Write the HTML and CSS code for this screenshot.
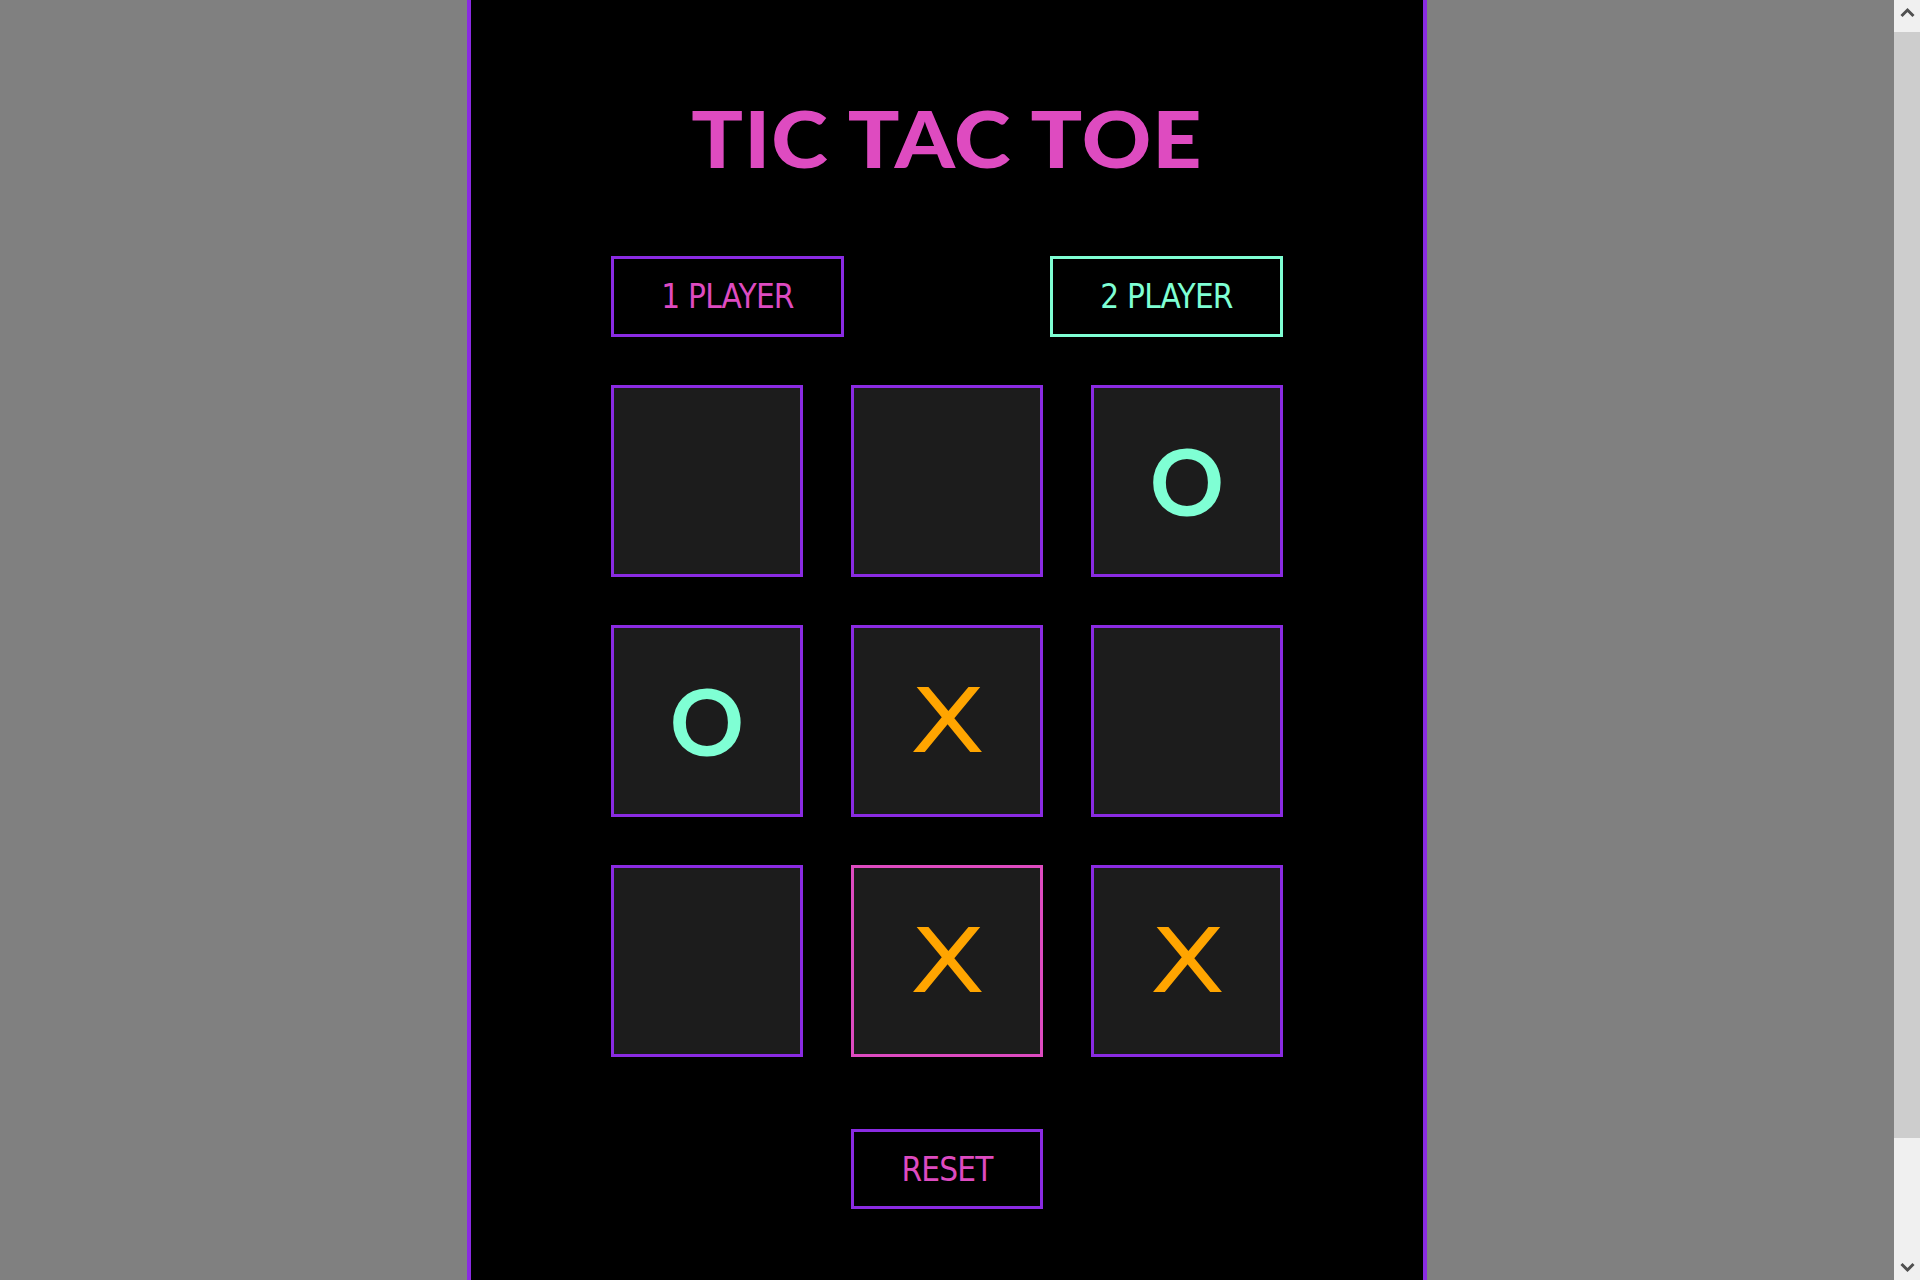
FILE: index.html
```html
<!DOCTYPE html>
<html lang="en">
<head>
<meta charset="utf-8">
<title>Tic Tac Toe</title>
<link rel="stylesheet" href="styles.css">
</head>
<body>
<div class="viewport">
  <main class="page">
    <h1 class="title">TIC TAC TOE</h1>
    <div class="modes">
      <button class="mode mode-one">1 PLAYER</button>
      <button class="mode mode-two">2 PLAYER</button>
    </div>
    <div class="board">
      <div class="cell"></div>
      <div class="cell"></div>
      <div class="cell"><span class="mark o">O</span></div>
      <div class="cell"><span class="mark o">O</span></div>
      <div class="cell"><span class="mark x">X</span></div>
      <div class="cell"></div>
      <div class="cell"></div>
      <div class="cell cell-active"><span class="mark x">X</span></div>
      <div class="cell"><span class="mark x">X</span></div>
    </div>
    <div class="actions">
      <button class="reset">RESET</button>
    </div>
  </main>
</div>
<div class="scrollbar" aria-hidden="true">
  <span class="sb-btn sb-up">
    <svg width="26" height="32" viewBox="0 0 26 32"><polyline points="7.5,16 13.5,10 19.5,16" fill="none" stroke="#505050" stroke-width="3"/></svg>
  </span>
  <span class="sb-track"><span class="sb-thumb"></span></span>
  <span class="sb-btn sb-down">
    <svg width="26" height="32" viewBox="0 0 26 32"><polyline points="7.5,16 13.5,22 19.5,16" fill="none" stroke="#505050" stroke-width="3"/></svg>
  </span>
</div>
</body>
</html>
```

FILE: styles.css
```css
html {
  background: #808080;
}
body {
  margin: 0;
  background: #808080;
  display: flex;
  align-items: flex-start;
  font-family: "DejaVu Sans Condensed", "DejaVu Sans", sans-serif;
}
.viewport {
  flex: 1;
  min-width: 0;
}
.page {
  box-sizing: border-box;
  width: 960px;
  min-height: 100vh;
  margin: 0 auto;
  background: #000;
  border-left: 4px solid #8a2be2;
  border-right: 4px solid #8a2be2;
  padding-top: 91px;
}
.title {
  margin: 0;
  text-align: center;
  font-family: "Lato", sans-serif;
  font-weight: 900;
  font-size: 78px;
  line-height: 94px;
  color: #de4bc0;
  letter-spacing: 1px;
  transform: scaleX(1.1);
}
.modes {
  width: 672px;
  margin: 71px auto 0;
  display: flex;
  justify-content: space-between;
}
button {
  font-family: "DejaVu Sans Condensed", "DejaVu Sans", sans-serif;
  font-size: 33px;
  letter-spacing: -0.8px;
  background: #000;
  padding: 0;
  cursor: pointer;
}
.mode {
  box-sizing: border-box;
  width: 233px;
  height: 81px;
  border: 3px solid #8a2be2;
  color: #de4bc0;
}
.mode-two {
  border-color: #7fffd4;
  color: #7fffd4;
}
.board {
  width: 672px;
  margin: 48px auto 0;
  display: grid;
  grid-template-columns: repeat(3, 192px);
  grid-auto-rows: 192px;
  gap: 48px;
}
.cell {
  box-sizing: border-box;
  border: 3px solid #8a2be2;
  background: #1c1c1c;
  display: flex;
  align-items: center;
  justify-content: center;
}
.cell-active {
  border-color: #de4bc0;
}
.mark {
  line-height: 1;
}
.x {
  font-family: "DejaVu Sans", sans-serif;
  font-size: 89px;
  color: #ffa500;
  transform: scaleX(1.24);
}
.o {
  font-family: "Lato", sans-serif;
  font-weight: 700;
  font-size: 92px;
  color: #7fffd4;
}
.actions {
  display: flex;
  justify-content: center;
  margin-top: 72px;
}
.reset {
  box-sizing: border-box;
  width: 192px;
  height: 80px;
  border: 3px solid #8a2be2;
  color: #de4bc0;
}
.scrollbar {
  position: sticky;
  top: 0;
  width: 26px;
  height: 100vh;
  flex: none;
  display: flex;
  flex-direction: column;
  background: #f0f0f0;
}
.sb-btn {
  display: block;
  height: 32px;
  flex: none;
}
.sb-btn svg {
  display: block;
}
.sb-track {
  flex: 1;
  display: block;
}
.sb-thumb {
  display: block;
  height: 1106px;
  background: #cdcdcd;
}
```
